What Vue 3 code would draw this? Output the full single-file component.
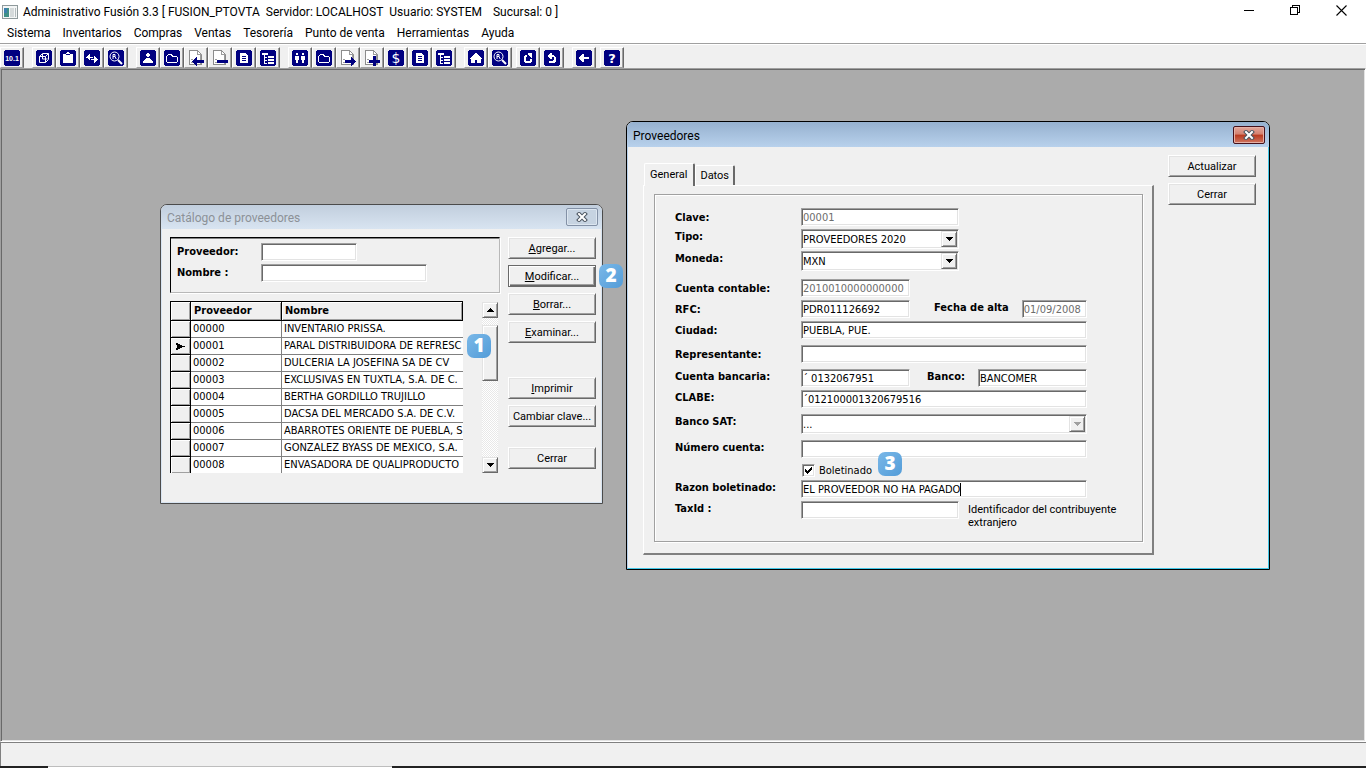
<script setup>
import { ref } from 'vue'

const titleParts = ['Administrativo Fusión 3.3 [ FUSION_PTOVTA', 'Servidor: LOCALHOST', 'Usuario: SYSTEM', 'Sucursal: 0 ]']
const menus = ['Sistema', 'Inventarios', 'Compras', 'Ventas', 'Tesorería', 'Punto de venta', 'Herramientas', 'Ayuda']

const toolGroups = [
  { gap: 'wide', tools: [{ n: 'code', t: '10.1' }] },
  { gap: 'wide', tools: [{ n: 'cube' }, { n: 'clipboard' }, { n: 'swap' }, { n: 'find' }] },
  { gap: 'wide', tools: [{ n: 'person' }, { n: 'folder' }, { n: 'pageBack' }, { n: 'pageMinus' }, { n: 'doc' }, { n: 'tree' }] },
  { gap: 'wide', tools: [{ n: 'people' }, { n: 'folder' }, { n: 'pageNext' }, { n: 'pagePlus' }, { n: 'money', t: '$' }, { n: 'doc' }, { n: 'tree' }] },
  { gap: 'narrow', tools: [{ n: 'home' }, { n: 'find' }] },
  { gap: 'wide', tools: [{ n: 'redo' }, { n: 'undo' }] },
  { gap: 'narrow', tools: [{ n: 'back' }] },
  { gap: 'narrow', tools: [{ n: 'help', t: '?' }] },
]
const glyphs = {
  clipboard: 'M3 4h3v1h4v-1h3v9h-10zM6 3h1v-1h2v1h1v1h-4z',
  swap: 'M2 7h1v-1h1v-1h1v-1h1v3h3v1h-3v2h-1v-1h-1v-1h-2zM14 9h-1v-1h-1v-1h-1v-1h-1v3h-3v1h3v3h1v-1h1v-1h1v-1h1z',
  person: 'M7 3h2v1h1v2h-1v1h-2v-1h-1v-2h1zM6 8h4v1h1v1h1v1h1v2h-10v-2h1v-1h1v-1h1z',
  folder: 'M3 5h1v-1h4v1h1v1h4v1h1v5h-1v1h-10v-1h-1v-6h1zM4 5v1h-1v6h10v-5h-5v-1h-1v-1z',
  doc: 'M4 3h6v1h1v1h1v8h-8zM6 6v1h4v-1zM6 8v1h4v-1zM6 10v1h4v-1z',
  tree: 'M2 3h6v2h-6zM4 5h1v2h2v1h-2v2h2v1h-2v2h2v1h-3zM8 6h6v2h-6zM8 9h6v2h-6zM8 12h6v2h-6z',
  people: 'M4 3h2v2h-2zM10 3h2v2h-2zM3 6h4v4h-1v3h-2v-3h-1zM9 6h4v4h-1v3h-2v-3h-1z',
  home: 'M7 3h2v1h1v1h1v1h1v1h1v1h1v1h-1v4h-4v-3h-2v3h-4v-4h-1v-1h1v-1h1v-1h1v-1h1v-1h1z',
  redo: 'M4 6h1v-1h2v2h-1v4h4v-2h2v3h-1v1h-6v-1h-1zM8 3h4v5h-1v-1h-1v-1h-1v-1h-1z',
  undo: 'M4 5h1v-1h1v-1h2v2h2v1h1v1h1v5h-1v1h-6v-2h4v-1h1v-3h-2v2h-2v-1h-1v-1h-1z',
  back: 'M3 7h1v-1h1v-1h1v-1h2v3h5v2h-5v3h-2v-1h-1v-1h-1v-1h-1z',
}
const overlays = {
  pageBack: 'M4 11h1v-1h1v-1h1v-1h1v-1h1v3h7v3h-7v3h-1v-1h-1v-1h-1v-1h-1v-1h-1z',
  pageMinus: 'M5 10h11v3h-11z',
  pageNext: 'M16 11h-1v-1h-1v-1h-1v-1h-1v-1h-1v3h-6v3h6v3h1v-1h1v-1h1v-1h1v-1h1z',
  pagePlus: 'M5 10h4v-4h3v4h4v3h-4v3h-3v-3h-4z',
}

const search = ref({ code: '', name: '' })
const providers = [
  ['00000', 'INVENTARIO PRISSA.'],
  ['00001', 'PARAL DISTRIBUIDORA DE REFRESC'],
  ['00002', 'DULCERIA LA JOSEFINA SA DE CV'],
  ['00003', 'EXCLUSIVAS EN TUXTLA, S.A. DE C.'],
  ['00004', 'BERTHA GORDILLO TRUJILLO'],
  ['00005', 'DACSA DEL MERCADO S.A. DE C.V.'],
  ['00006', 'ABARROTES ORIENTE DE PUEBLA, S'],
  ['00007', 'GONZALEZ BYASS DE MEXICO, S.A.'],
  ['00008', 'ENVASADORA DE QUALIPRODUCTO'],
]
const selected = ref(1)
const actions = [
  { k: 'A', t: 'gregar...' },
  { k: 'M', t: 'odificar...', def: true },
  { k: 'B', t: 'orrar...' },
  { k: 'E', t: 'xaminar...' },
  { k: 'I', t: 'mprimir', far: true },
  { k: '', t: 'Cambiar clave...' },
  { k: '', t: 'Cerrar', apart: true },
]

const form = ref({
  clave: '00001', tipo: 'PROVEEDORES 2020', moneda: 'MXN', contable: '2010010000000000', rfc: 'PDR011126692',
  alta: '01/09/2008', ciudad: 'PUEBLA, PUE.', rep: '', bancaria: '´ 0132067951', banco: 'BANCOMER',
  clabe: '´012100001320679516', sat: '...', numero: '', boletinado: true, razon: 'EL PROVEEDOR NO HA PAGADO', tax: '',
})
</script>

<template>
  <div class="app">
    <header class="titlebar">
      <svg class="logo" viewBox="0 0 16 14" shape-rendering="crispEdges" aria-hidden="true">
        <rect width="16" height="14" fill="#8f9a9c" />
        <rect x="1" y="1" width="14" height="12" fill="#f4f6f6" />
        <rect x="2" y="3" width="5" height="9" fill="#3f8f86" />
        <rect x="2" y="3" width="3" height="5" fill="#3d7fae" />
        <rect x="8" y="3" width="4" height="9" fill="#d5dadb" />
        <rect x="13" y="3" width="1" height="9" fill="#b4bcbe" />
      </svg>
      <h1 class="caption"><span v-for="p in titleParts" :key="p">{{ p }}</span></h1>
      <div class="winctl">
        <button type="button" aria-label="Minimizar"><svg viewBox="0 0 11 11" shape-rendering="crispEdges"><path d="M0 5h10v1H0z" /></svg></button>
        <button type="button" aria-label="Restaurar"><svg viewBox="0 0 11 11" shape-rendering="crispEdges"><path d="M0 2h8v8H0zM1 3v6h6V3zM2 0h8v8H8V7h1V1H3v1H2z" fill-rule="evenodd" /></svg></button>
        <button type="button" aria-label="Cerrar ventana"><svg viewBox="0 0 11 11"><path d="M.5.5l10 10M10.500 .5l-10 10" stroke="#000" stroke-width="1.100" /></svg></button>
      </div>
    </header>

    <nav class="menubar">
      <a v-for="m in menus" :key="m" href="#">{{ m }}</a>
    </nav>

    <div class="toolbar" role="toolbar" aria-label="Herramientas">
      <div v-for="(g, gi) in toolGroups" :key="gi" class="tools" :class="g.gap">
        <button v-for="(t, ti) in g.tools" :key="ti" type="button" class="tool" :aria-label="t.n">
          <svg viewBox="0 0 16 16" shape-rendering="crispEdges">
            <template v-if="overlays[t.n]">
              <path d="M1.500 .5h8l4 4v10h-12z" fill="#fff" stroke="#8c8c8c" />
              <path d="M9.500 .5v4h4M3 9.500h2M3 12.500h6M12.500 5v9" fill="none" stroke="#9c9c9c" />
              <path :d="overlays[t.n]" fill="#000080" />
            </template>
            <template v-else>
              <path d="M1 0h14v1h1v14h-1v1h-14v-1h-1v-14h1z" fill="#000080" />
              <path v-if="glyphs[t.n]" :d="glyphs[t.n]" fill="#fff" fill-rule="evenodd" />
              <path v-else-if="t.n === 'cube'" d="M3.500 6.500h6v6h-6zM3.500 6.500l3-3h6v6l-3 3M12.500 3.500l-3 3M6.500 4v5h5" fill="none" stroke="#fff" shape-rendering="auto" />
              <g v-else-if="t.n === 'find'" shape-rendering="auto">
                <circle cx="6.500" cy="6.500" r="4.500" fill="none" stroke="#fff" stroke-width="1" />
                <path d="M5 9V4.500h2v2h-2M7 6.500l1.200 2.500" fill="none" stroke="#fff" stroke-width="1" />
                <path d="M10 10l4 4" stroke="#fff" stroke-width="2" />
              </g>
              <text v-else :class="t.n" x="8" :y="t.n === 'code' ? 11 : 13" text-anchor="middle" fill="#fff">{{ t.t }}</text>
            </template>
          </svg>
        </button>
      </div>
    </div>

    <main class="workspace">
      <section class="dialog catalog" aria-label="Catálogo de proveedores">
        <header class="dlg-title">
          <h2>Catálogo de proveedores</h2>
          <button type="button" class="close" aria-label="Cerrar catálogo">
            <svg viewBox="0 0 12 10"><path d="M3 2l6 6M9 2l-6 6" stroke="#4b5560" stroke-width="4" stroke-linecap="square" /><path d="M3 2l6 6M9 2l-6 6" stroke="#fff" stroke-width="2" stroke-linecap="square" /></svg>
          </button>
        </header>
        <div class="dlg-body">
          <div class="left">
            <div class="filter">
              <div class="row"><label for="f-code">Proveedor:</label><input id="f-code" v-model="search.code" class="box w96" type="text"></div>
              <div class="row"><label for="f-name">Nombre :</label><input id="f-name" v-model="search.name" class="box w166" type="text"></div>
            </div>
            <div class="listing">
              <table class="grid">
                <colgroup><col class="c1"><col class="c2"><col></colgroup>
                <thead><tr><th class="handle"></th><th>Proveedor</th><th>Nombre</th></tr></thead>
                <tbody>
                  <tr v-for="(p, i) in providers" :key="p[0]" @click="selected = i">
                    <td class="handle"><svg v-if="i === selected" viewBox="0 0 9 7" shape-rendering="crispEdges"><path d="M0 0h2v1h2v1h2v1h3v1H6v1H4v1H2v1H0V5h1V2H0z" /></svg></td>
                    <td>{{ p[0] }}</td>
                    <td>{{ p[1] }}</td>
                  </tr>
                </tbody>
              </table>
              <div class="scroll">
                <button type="button" class="arrow" aria-label="Subir"><svg viewBox="0 0 7 4" shape-rendering="crispEdges"><path d="M3 0h1v1h1v1h1v1h1v1H0V3h1V2h1V1h1z" /></svg></button>
                <div class="track"><div class="thumb"></div></div>
                <button type="button" class="arrow" aria-label="Bajar"><svg viewBox="0 0 7 4" shape-rendering="crispEdges"><path d="M0 0h7v1H6v1H5v1H4v1H3V3H2V2H1V1H0z" /></svg></button>
              </div>
            </div>
          </div>
          <div class="actions">
            <button v-for="a in actions" :key="a.t" type="button" class="btn" :class="{ def: a.def, far: a.far, apart: a.apart }"><span><u v-if="a.k">{{ a.k }}</u>{{ a.t }}</span></button>
          </div>
        </div>
        <span class="badge b1">1</span>
        <span class="badge b2">2</span>
      </section>

      <section class="dialog detail" aria-label="Proveedores">
        <header class="dlg-title">
          <h2>Proveedores</h2>
          <button type="button" class="close" aria-label="Cerrar detalle">
            <svg viewBox="0 0 12 10"><path d="M3 2l6 6M9 2l-6 6" stroke="#4b5560" stroke-width="4" stroke-linecap="square" /><path d="M3 2l6 6M9 2l-6 6" stroke="#fff" stroke-width="2" stroke-linecap="square" /></svg>
          </button>
        </header>
        <div class="dlg-body">
          <div class="tabs">
            <div class="tablist" role="tablist">
              <button type="button" class="tab on" role="tab" aria-selected="true">General</button>
              <button type="button" class="tab" role="tab" aria-selected="false">Datos</button>
            </div>
            <div class="page">
              <form class="frame" @submit.prevent>
                <div class="row"><label for="clave">Clave:</label><input id="clave" v-model="form.clave" class="box w158" type="text" disabled></div>
                <div class="row combo"><label for="tipo">Tipo:</label>
                  <span class="select w158"><select id="tipo" v-model="form.tipo"><option>PROVEEDORES 2020</option></select><i class="arrow"><svg viewBox="0 0 7 4" shape-rendering="crispEdges"><path d="M0 0h7v1H6v1H5v1H4v1H3V3H2V2H1V1H0z" /></svg></i></span></div>
                <div class="row combo tight"><label for="moneda">Moneda:</label>
                  <span class="select w158"><select id="moneda" v-model="form.moneda"><option>MXN</option></select><i class="arrow"><svg viewBox="0 0 7 4" shape-rendering="crispEdges"><path d="M0 0h7v1H6v1H5v1H4v1H3V3H2V2H1V1H0z" /></svg></i></span></div>
                <div class="row block"><label for="contable">Cuenta contable:</label><input id="contable" v-model="form.contable" class="box w109" type="text" disabled></div>
                <div class="row"><label for="rfc">RFC:</label><input id="rfc" v-model="form.rfc" class="box w109" type="text">
                  <label for="alta" class="second high">Fecha de alta</label><input id="alta" v-model="form.alta" class="box w65" type="text" disabled></div>
                <div class="row"><label for="ciudad">Ciudad:</label><input id="ciudad" v-model="form.ciudad" class="box fill" type="text"></div>
                <div class="row gap"><label for="rep">Representante:</label><input id="rep" v-model="form.rep" class="box fill" type="text"></div>
                <div class="row gap raised"><label for="bancaria">Cuenta bancaria:</label><input id="bancaria" v-model="form.bancaria" class="box w109" type="text">
                  <label for="banco" class="second">Banco:</label><input id="banco" v-model="form.banco" class="box w109" type="text"></div>
                <div class="row raised"><label for="clabe">CLABE:</label><input id="clabe" v-model="form.clabe" class="box fill" type="text"></div>
                <div class="row gap combo"><label for="sat">Banco SAT:</label>
                  <span class="select fill off"><select id="sat" v-model="form.sat" disabled><option>...</option></select><i class="arrow"><svg viewBox="0 0 7 4" shape-rendering="crispEdges"><path d="M0 0h7v1H6v1H5v1H4v1H3V3H2V2H1V1H0z" /></svg></i></span></div>
                <div class="row gap raised"><label for="numero">Número cuenta:</label><input id="numero" v-model="form.numero" class="box fill" type="text"></div>
                <div class="row gap checkrow">
                  <span class="check"><input id="bol" v-model="form.boletinado" type="checkbox"><svg v-if="form.boletinado" viewBox="0 0 7 7" shape-rendering="crispEdges"><path d="M0 2h1v1h1v1h1V3h1V2h1V1h1V0h1v3H6v1H5v1H4v1H3v1H2V6H1V5H0z" /></svg></span>
                  <label for="bol">Boletinado</label>
                  <span class="badge b3">3</span>
                </div>
                <div class="row raised"><label for="razon">Razon boletinado:</label>
                  <span class="box fill typing"><input id="razon" v-model="form.razon" type="text"><i class="caret"></i></span></div>
                <div class="row raised"><label for="tax">TaxId :</label><input id="tax" v-model="form.tax" class="box w158" type="text"><p class="hint">Identificador del contribuyente extranjero</p></div>
              </form>
            </div>
          </div>
          <div class="actions">
            <button type="button" class="btn">Actualizar</button>
            <button type="button" class="btn">Cerrar</button>
          </div>
        </div>
      </section>
    </main>

    <footer class="status"></footer>
    <div class="edge"><i class="dark short"></i><i class="light"></i><i class="dark rest"></i></div>
  </div>
</template>

<style>
html, body { margin: 0; overflow: hidden; }
</style>

<style scoped>
.app { display: flex; flex-direction: column; height: 100vh; background: #fff; color: #000; font: 12px/16px Roboto, "Open Sans", sans-serif; }
* { box-sizing: border-box; }
button, input, select { font: inherit; color: inherit; margin: 0; padding: 0; border: 0; border-radius: 0; outline: 0; }
h1, h2, p { margin: 0; font: inherit; }
i { font-style: normal; }

.titlebar { display: flex; align-items: center; height: 23px; flex: none; padding: 0 2px; }
.logo { width: 16px; height: 14px; margin-right: 5px; }
.caption { display: flex; gap: 6px; flex: 1; }
.caption span:last-child { margin-left: 5px; }
.winctl { display: flex; align-self: flex-start; }
.winctl button { width: 46px; height: 21px; background: none; display: grid; place-items: center; }
.winctl svg { width: 11px; height: 11px; }
.menubar { display: flex; align-items: center; gap: 12px; height: 19px; flex: none; padding-left: 7px; }
.menubar a { color: #000; text-decoration: none; }

.toolbar { display: flex; flex: none; margin-top: 1px; border-top: 1px solid #a0a0a0; background: #f0f0f0; box-shadow: inset 0 1px #fff; padding-top: 3px; }
.tools { display: flex; }
.tools.wide { margin-right: 8px; }
.tools.narrow { margin-right: 4px; }
.tool { width: 24px; height: 21px; background: #f0f0f0; display: grid; place-items: center; border-left: 1px solid #fff; border-top: 1px solid #fff; border-right: 1px solid #696969; border-bottom: 1px solid #a0a0a0; box-shadow: inset -1px 0 #a0a0a0; }
.tool svg { width: 16px; height: 16px; overflow: visible; }
.code { font: bold 7px "Liberation Sans", sans-serif; }
.money { font: 14px "DejaVu Sans", sans-serif; }
.help { font: bold 13px "DejaVu Sans", sans-serif; }

.workspace { position: relative; flex: 1; min-height: 0; background: #ababab; border: 1px solid #a0a0a0; border-right-color: #fff; border-bottom-color: #fff; box-shadow: inset 1px 1px #696969, inset -1px -1px #e3e3e3; }
.status { flex: none; height: 24px; background: #f0f0f0; border-top: 1px solid #808080; border-left: 1px solid #808080; }
.edge { display: flex; flex: none; height: 2px; }
.dark { background: #222; }
.short { width: 48px; }
.light { width: 344px; border-top: 1px solid #bdbdbd; background: #fff; }
.rest { flex: 1; }

.dialog { position: absolute; background: #f0f0f0; border: 1px solid #4b4b4b; border-radius: 7px 7px 0 0; }
.dlg-title { display: flex; align-items: center; justify-content: space-between; height: 24px; padding: 0 4px 0 6px; border-radius: 6px 6px 0 0; }
.dlg-title h2 { padding-top: 2px; }
.close { width: 32px; height: 18px; display: grid; place-items: center; border: 1px solid #8391a6; border-radius: 2px; background: #c6d3e1; box-shadow: inset 0 0 0 1px #dce6f0; }
.close svg { width: 12px; height: 10px; }
.dlg-body { display: flex; }
.actions { display: flex; flex-direction: column; gap: 6px; width: 88px; flex: none; }

.catalog { left: 159px; top: 135px; width: 443px; }
.catalog .dlg-title { background: linear-gradient(#c1cedd, #d8e4f1); color: #8c9197; }
.catalog .dlg-body { padding: 8px 5px 29px 8px; gap: 8px; border: solid #d8e4f1; border-width: 0 1px 1px; }
.left { flex: 1; min-width: 0; }
.detail { left: 625px; top: 52px; width: 644px; border-color: #000; box-shadow: inset -1px -1px #43c8e8, inset 1px 1px #fff; }
.detail .dlg-title { height: 25px; background: linear-gradient(#96b1cf, #b8d1ec); }
.detail .dlg-body { padding: 8px 12px 13px 15px; gap: 14px; border-left: 1px solid #b8d1ec; border-bottom: 1px solid #43c8e8; border-right: 1px solid #43c8e8; }
.detail .close { border-color: #45101a; background: linear-gradient(#e2a79c, #d4806f 45%, #b9391f 50%, #cf7560); box-shadow: inset 0 0 0 1px #e5b0a6; }

.btn { height: 22px; padding-top: 1px; background: #f0f0f0; font-size: 11px; text-align: center; border: 1px solid; border-color: #fff #696969 #696969 #fff; box-shadow: inset 1px 1px #e3e3e3, inset -1px -1px #a0a0a0; }
.btn.def { border-color: #696969; box-shadow: inset 1px 1px #fff, inset -1px -1px #696969, inset -2px -2px #a0a0a0; }
.btn.far { margin-top: 28px; }
.btn.apart { margin-top: 14px; }

.filter { height: 56px; padding: 5px 6px; border: 1px solid; border-color: #000 #b8b8b8 #b8b8b8 #000; box-shadow: inset 0 1px #808080, 1px 1px #fff; }
.filter .row + .row { margin-top: 3px; }
.row { display: flex; align-items: center; font: 11px/13px "DejaVu Sans Condensed", "DejaVu Sans", sans-serif; }
.row label { font-weight: bold; white-space: nowrap; }
.filter label { width: 84px; padding-bottom: 2px; }
.raised label, .raised label.second { padding-bottom: 4px; }
.combo label { padding-bottom: 6px; }

.box { height: 18px; padding: 1px 0 0 1px; background: #fff; border: 1px solid; border-color: #a0a0a0 #fff #fff #a0a0a0; box-shadow: inset 1px 1px #696969, inset -1px -1px #e3e3e3; min-width: 0; }
.box:disabled { color: #6d6d6d; }
.w65 { width: 65px; }
.w96 { width: 96px; }
.w109 { width: 109px; }
.w158 { width: 158px; }
.w166 { width: 166px; }
.fill { width: 286px; }

.listing { display: flex; justify-content: space-between; margin-top: 8px; padding-right: 2px; }
.grid { width: 293px; table-layout: fixed; border-spacing: 0; border-top: 1px solid #000; border-left: 1px solid #000; font: 11px/13px "DejaVu Sans Condensed", "DejaVu Sans", sans-serif; background: #fff; }
.c1 { width: 20px; }
.c2 { width: 91px; }
.grid th { height: 19px; padding: 0 2px 2px 3px; text-align: left; background: #f0f0f0; border-right: 1px solid #000; border-bottom: 1px solid #000; box-shadow: inset 1px 1px #fff, inset -1px -1px #a0a0a0; }
.grid td { height: 17px; padding: 0 0 2px 2px; white-space: nowrap; border-right: 1px solid #808080; border-bottom: 1px solid #808080; }
.grid td:last-child { border-right: 0; border-left: 0; }
.grid tr:last-child td { height: 16px; border-bottom: 0; }
.grid .handle { padding: 0 0 0 5px; background: #f0f0f0; border-right: 1px solid #000; border-bottom: 1px solid #000; box-shadow: inset 1px 1px #fff, inset -1px -1px #a0a0a0; }
.handle svg { display: block; width: 9px; height: 7px; }
.scroll { display: flex; flex-direction: column; width: 16px; padding-top: 1px; }
.track { flex: 1; padding-top: 7px; background: repeating-conic-gradient(#fff 0 25%, #e8e8e8 0 50%) 0 0 / 2px 2px; }
.thumb, .arrow { background: #f0f0f0; border: 1px solid; border-color: #e3e3e3 #696969 #696969 #e3e3e3; box-shadow: inset 1px 1px #fff, inset -1px -1px #a0a0a0; }
.thumb { height: 56px; }
.arrow { display: grid; place-items: center; height: 16px; width: 16px; flex: none; }
.arrow svg { width: 7px; height: 4px; }

.tabs { flex: 1; min-width: 0; padding-top: 8px; }
.tablist { display: flex; align-items: flex-end; padding-left: 1px; }
.tab { position: relative; height: 20px; padding: 0 4px; background: #f0f0f0; font-size: 11px; border: solid; border-width: 1px 2px 0 1px; border-color: #fff #696969 #fff #fff; border-radius: 2px 2px 0 0; }
.tab.on { height: 23px; padding: 0 6px 1px 5px; margin-bottom: -1px; z-index: 1; }
.page { padding: 8px 9px 11px 10px; border: solid; border-width: 1px 2px 2px 1px; border-color: #fff #808080 #808080 #fff; }
.frame { padding: 13px 0 22px 20px; border: 1px solid #a0a0a0; box-shadow: inset 1px 1px #fff, 1px 1px #fff; }
.frame .row + .row { margin-top: 3px; }
.frame .row.gap { margin-top: 6px; }
.frame .row.tight { margin-top: 2px; }
.frame .row.block { margin-top: 8px; }
.frame label { width: 126px; }
.frame label.second { width: auto; margin-left: 24px; margin-right: 13px; }
.frame label.second:not(.high) { margin-left: 17px; }
.frame label.high { padding-bottom: 4px; }
.select { position: relative; display: block; height: 20px; background: #fff; border: 1px solid; border-color: #a0a0a0 #fff #fff #a0a0a0; box-shadow: inset 1px 1px #696969, inset -1px -1px #e3e3e3; }
.select select { display: block; appearance: none; width: 100%; height: 18px; padding-left: 1px; background: none; opacity: 1; }
.select .arrow { position: absolute; right: 1px; top: 1px; pointer-events: none; }
.off .arrow svg { fill: #a0a0a0; }
.frame .checkrow { padding-left: 127px; height: 13px; position: relative; }
.frame .checkrow label { width: auto; margin-left: 4px; font-weight: normal; }
.check { position: relative; width: 13px; height: 13px; }
.check input { appearance: none; display: block; width: 13px; height: 13px; background: #fff; border: 1px solid; border-color: #a0a0a0 #fff #fff #a0a0a0; box-shadow: inset 1px 1px #696969, inset -1px -1px #e3e3e3; }
.check svg { position: absolute; left: 3px; top: 3px; width: 7px; height: 7px; pointer-events: none; }
.typing { display: flex; align-items: center; }
.typing input { field-sizing: content; max-width: 280px; background: none; }
.caret { width: 1px; height: 13px; background: #000; }
.hint { width: 160px; margin: 2px 0 -10px 9px; font: 11px/13px Roboto, sans-serif; }

.badge { position: absolute; width: 24px; height: 24px; border-radius: 7px; background: linear-gradient(135deg, #7ab8e8, #539cd8); color: #fff; font: 800 19px/23px "Open Sans", "Noto Sans", sans-serif; text-align: center; }
.b1 { left: 306px; top: 129px; }
.b2 { left: 438px; top: 59px; }
.b3 { left: 203px; top: -12px; }
</style>
